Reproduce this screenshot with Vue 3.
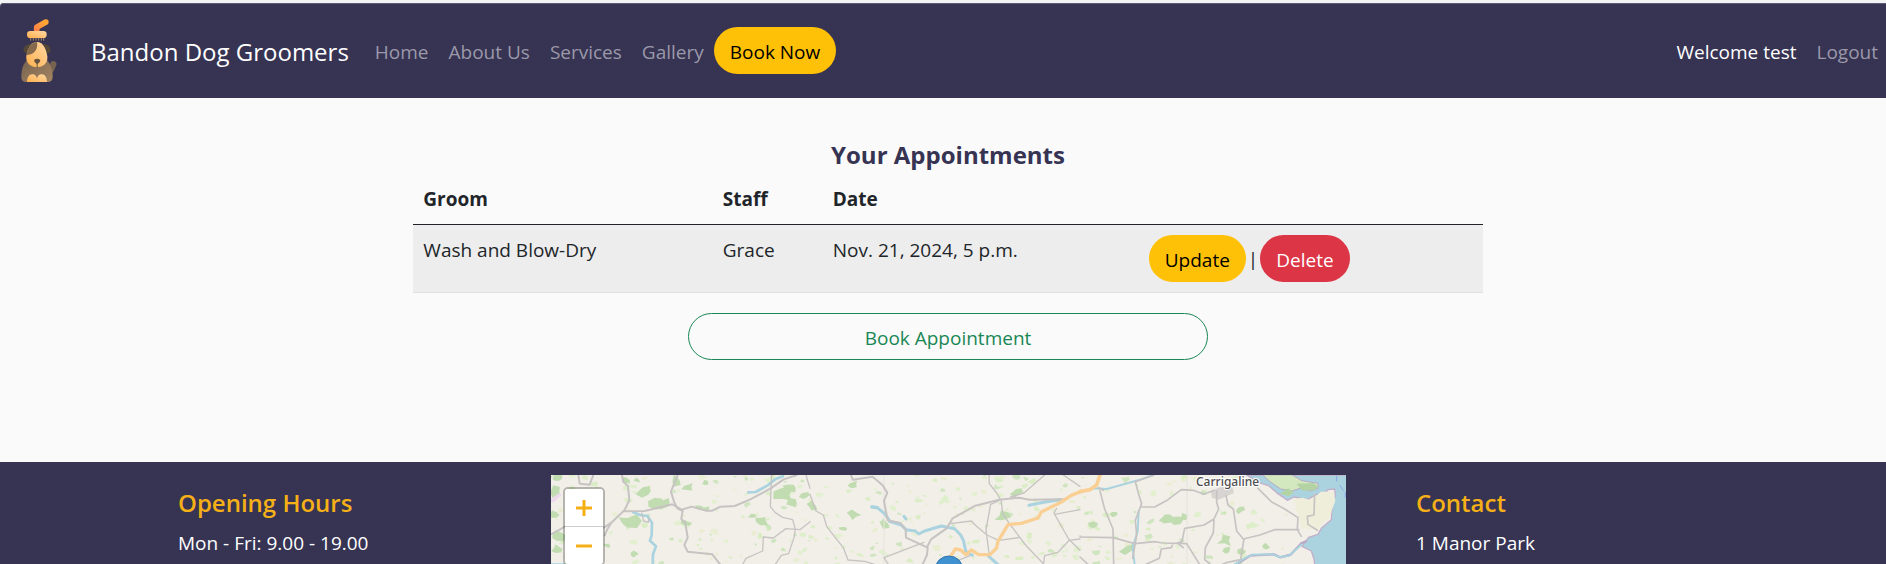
<script setup>
const links = ['Home', 'About Us', 'Services', 'Gallery']
const appointments = [{ id: 1, groom: 'Wash and Blow-Dry', staff: 'Grace', date: 'Nov. 21, 2024, 5 p.m.' }]

let seed = 11
const rand = () => {
  seed = (seed * 16807) % 2147483647
  return seed / 2147483647
}
const tones = ['#d3ecbb', '#d9efc4', '#c5e2b4', '#e6edcd', '#dff0c9']
const blob = (x, y, r) => {
  const points = []
  for (let i = 0; i < 7; i++) {
    const a = (i / 7) * Math.PI * 2
    const d = r * (0.4 + rand() * 0.9)
    points.push(`${(x + Math.cos(a) * d * 1.3).toFixed(1)},${(y + Math.sin(a) * d * 0.9).toFixed(1)}`)
  }
  return points.join(' ')
}
const fields = Array.from({ length: 330 }, (_, i) => {
  const x = rand() * 735
  const y = rand() * 92
  return { id: i, points: blob(x, y, 1 + rand() * 2.6), fill: tones[i % tones.length] }
})
const woods = [
  [6, 3, 6], [4, 16, 6], [3, 40, 4], [7, 61, 6], [6, 74, 5], [75, 5, 4], [86, 5, 3], [93, 16, 6], [78, 46, 8],
  [106, 29, 8], [112, 28, 6], [125, 6, 7], [137, 12, 5], [148, 32, 4], [156, 34, 3], [135, 48, 5], [84, 79, 4],
  [154, 8, 3], [211, 45, 6], [201, 41, 3], [234, 20, 8], [239, 13, 5], [240, 28, 5], [254, 20, 4], [56, 70, 3],
  [303, 40, 5], [334, 49, 5], [292, 54, 3], [262, 31, 5], [302, 9, 4], [452, 42, 6], [466, 17, 5],
  [543, 50, 5], [563, 40, 3], [576, 74, 6], [615, 43, 6], [625, 45, 6], [633, 43, 5], [689, 35, 4], [674, 66, 6],
  [676, 75, 5], [691, 76, 4], [716, 72, 4], [736, 18, 4], [742, 6, 4], [762, 12, 5]
].map(([x, y, r], id) => ({ id, points: blob(x, y, r) }))
</script>

<template>
  <div class="page">
    <nav class="navbar">
      <a class="brand" href="#">
        <svg class="logo" viewBox="0 0 108 192" aria-hidden="true">
          <defs>
            <linearGradient id="fur" x1="0" y1="1" x2="1" y2="0">
              <stop offset="0" stop-color="#ffb04d" />
              <stop offset="1" stop-color="#ffd8a4" />
            </linearGradient>
            <linearGradient id="coat" x1="0" y1="0" x2="1" y2="1">
              <stop offset="0" stop-color="#75624f" />
              <stop offset="1" stop-color="#a58561" />
            </linearGradient>
            <linearGradient id="grip" x1="0" y1="1" x2="1" y2="0">
              <stop offset="0" stop-color="#ff8047" />
              <stop offset="1" stop-color="#ffab32" />
            </linearGradient>
          </defs>
          <path d="M47 38V25L75 9" fill="none" stroke="url(#grip)" stroke-width="17" stroke-linejoin="round" />
          <circle cx="75" cy="9" r="8" fill="#ffa333" />
          <rect x="18" y="36" width="59" height="21" rx="10" fill="url(#fur)" />
          <path d="M29 57v8M37 57v8M45 57v8M53 57v8M61 57v8M68 57v8" stroke="#a98667" stroke-width="3" />
          <path d="M88 168V132q3-8 13-5 9 5 4 14-4 16-17 28z" fill="#75624f" />
          <path d="M22 120C7 132 1 150 1 174q0 15 14 15h65q15 0 15-15c0-24-6-42-21-54z" fill="url(#coat)" />
          <path d="M29 75Q10 75 7 94q4 11 17 8zM66 75q20 0 23 19-4 12-16 9z" fill="#554736" />
          <path d="M48 69c19 0 28 24 31 43 2 21-13 33-31 33s-34-12-32-33c2-19 13-43 32-43z" fill="url(#fur)" />
          <path d="M48 69c3 18-4 38-31 39 2-19 14-39 31-39z" fill="#84694d" />
          <path d="M39 123q9-8 19 0 0 8-8 12v11h-3v-11q-8-4-8-12z" fill="#66533f" />
          <path d="M18 189c0-13 6-23 16-23s15 8 15 23zM47 189c0-15 5-23 15-23s16 10 16 23z" fill="url(#fur)" />
        </svg>
        <span>Bandon Dog Groomers</span>
      </a>
      <a v-for="link in links" :key="link" class="nav-link" href="#">{{ link }}</a>
      <a class="btn warning" href="#">Book Now</a>
      <span class="welcome">Welcome test</span>
      <a class="nav-link" href="#">Logout</a>
    </nav>

    <main>
      <h1>Your Appointments</h1>
      <table>
        <colgroup>
          <col class="groom" /><col class="staff" /><col class="date" /><col />
        </colgroup>
        <thead>
          <tr><th>Groom</th><th>Staff</th><th>Date</th><th></th></tr>
        </thead>
        <tbody>
          <tr v-for="a in appointments" :key="a.id">
            <td>{{ a.groom }}</td>
            <td>{{ a.staff }}</td>
            <td>{{ a.date }}</td>
            <td>
              <div class="actions">
                <button type="button" class="btn warning">Update</button>
                <span>|</span>
                <button type="button" class="btn danger">Delete</button>
              </div>
            </td>
          </tr>
        </tbody>
      </table>
      <a class="btn outline" href="#">Book Appointment</a>
    </main>

    <footer>
      <section class="info hours">
        <h2>Opening Hours</h2>
        <p>Mon - Fri: 9.00 - 19.00</p>
      </section>
      <div class="map">
        <svg class="tiles" viewBox="0 0 795 90" preserveAspectRatio="xMidYMin slice" aria-label="Map">
          <rect width="795" height="90" fill="#f2efe9" />
          <polygon v-for="f in fields" :key="f.id" :points="f.points" :fill="f.fill" opacity="0.8" />
          <polygon v-for="w in woods" :key="w.id" :points="w.points" fill="#c0dcb0" />
          <path d="M0 24l8-6 3 2-8 7H0z" fill="#ecd9ec" />
          <path d="M333 0V90M636 0V90" stroke="#e6e3dc" stroke-width="1" />

          <g transform="translate(-11 -24) scale(.3333)" fill="none" stroke-linecap="round" stroke-linejoin="round">
            <path d="M280 184l20 8 22 3 14 20-1 38-5 16 18 17-9 24-1 40M625 124l22-1 36-20 24-19 22-8M33 341h40" stroke="#aad3df" stroke-width="8" />
            <g stroke="#c6c3c2" stroke-width="6">
              <path d="M246 72l4 20 14 13 4 42-14 30-40 38-12 20-8 18M33 250l30-16 12-8M115 72l4 26 30 3 11-29" />
              <path d="M192 230l20-14M254 181l60-1 83-20 28 16 30-9 42 12h20l24-12 43-2 47-20 60-32 40-28 38-12" />
              <path d="M413 72l-20 50 9 30 10 20 16 8-4 24 12 12 7 44-10 22 10 20 74 8 24 31" />
              <path d="M305 186l6 24 14 4 2-14" stroke-width="4" />
              <path d="M695 72l-4 95 15 18 22 14 30 7 8 28-4 26-16 48-22 5-20 30M810 212l-30 24-42-3-38 28-30-3-2 42-50 22-10 18M798 72l12 40" stroke-width="4" />
            </g>
          </g>

          <g transform="translate(259 -24) scale(.3333)" fill="none" stroke-linecap="round" stroke-linejoin="round">
            <path d="M186 168l16 2 24 20 14 22 34 10 14 14 28 4 10 9 18-9 50-15 40 8 18 19 9 18 6 30 20 13M657 163l44-9 50-8M535 315l30 27M282 196l6 8" stroke="#aad3df" stroke-width="9" />
            <path d="M186 168l16 2" stroke="#aad3df" stroke-width="10" />
            <g stroke="#c6c3c2" stroke-width="6">
              <path d="M123 72l5 14 60-9 30 26 14 22-10 25 11 58 38 8 16 20 1 24 65 30-2 22-14 30M353 285l10-20 47-33 18-30 68-38 72-18 60-6 30 6 102-1" />
              <path d="M537 72l1 26 22 28 14 24 4 38 22 32 50 66 54 56M420 218l64-8 14 14 33 28 35 16 60-8M566 150l-24 10-14 76 9 70M602 138l40-12 62-54M740 172l-8 14 44 78 34 34M734 190l76-14M410 342l70-28" stroke-width="4" />
              <path d="M0 130l18 50 22 12 10 34 26 34 24 30 14 37 50 4 30 9M222 320l120-46M222 320l14 22M700 342l4-28 40-10 34-36 32-4M760 72l50 34" stroke-width="4" />
            </g>
            <path d="M424 312l12-18 16 3 16 14 16-14 22 14h34l20-20 4-20 30-50 40-4 50-16 10-18 60-30 30-20 30-12" stroke="#f9cf93" stroke-width="10" />
          </g>

          <g transform="translate(529 -24) scale(.3333)" fill="none" stroke-linecap="round" stroke-linejoin="round">
            <path d="M500 72l34 22 32 10 28 24 28 20 20-10 40 8 28-16 18 4 16-18 20-2 2 20-9 24-3 48-30 26-10 18-28 9-20 27 28 14 8 24 6 46h98V72z" fill="#aad3df" stroke="#c3afca" stroke-width="4" />
            <path d="M640 144l28-4 20 6 24-14 10-10h26l14 4 4 24-10 26-4 20-24 20-16 20-46-4z" fill="#eeeeda" />
            <path d="M548 72l22 20 32 22 34 6 30-10 24 10 24-8 0-15-48-8-30-17z" fill="#d4e8bf" stroke="#b9a9c6" stroke-width="3" />
            <path d="M650 98l50-2 16 12-14 10-36 1zM600 128l24-16 18 12-16 12z" fill="#b4d3a5" />
            <path d="M392 120l38-14 28 4 4 16-46 20-20-6z" fill="#d7d4d1" />
            <path d="M476 336l34-22 72-4 18 9 32-8 32-34 14-6" stroke="#b9a9c6" stroke-width="7" />
            <path d="M462 341l30-18 24-12 62-1 20 8 28-3 38-34M176 180l-3 60-15 50 6 50M0 124l40-12 40 2 100-28 40-14" stroke="#aad3df" stroke-width="6" />
            <g stroke="#c6c3c2" stroke-width="5">
              <path d="M60 120l14 54 25 60 2 108M222 72l-56 20 10 38 9 28-19 50 4 44-12 70M184 168h40l40-22 40-30 36 2 32 12 30-12" />
              <path d="M410 120v34l6 20-14 30-30 18-58 10-8 40-14 4 18 14M402 208l-2 38-24 44-2 36 20 16M438 134l6 28 16 12 10 66 20 24 50-12 44-16h72M492 264l-10 62-40 8-20 8" />
              <path d="M534 112l40 40 40 22 40 26-2 36 12 20M704 130l-2 62-20 4 2 24 28 18M0 258l100 2 64 18 60-6 24 4 72 2 40 64M280 276l-6 14-30 4-6 28-40 18" />
              <path d="M0 318l26 24M56 110l14 8" />
            </g>
            <path d="M0 122l30-6 20-14 10-30" stroke="#f9cf93" stroke-width="11" />
            <path d="M770 76v14M780 104l10 14M796 124v14" stroke="#8ba6e6" stroke-width="3" />
          </g>

          <text x="645" y="11" class="place">Carrigaline</text>
          <g class="marker">
            <circle cx="398" cy="95" r="14" fill="#3f92cf" stroke="#2e74ae" />
            <circle cx="398" cy="95" r="6" fill="#7ab5df" />
          </g>
        </svg>
        <div class="zoom">
          <button type="button" aria-label="Zoom in">
            <svg viewBox="0 0 16 16"><path d="M0 8h16M8 0v16" /></svg>
          </button>
          <button type="button" aria-label="Zoom out">
            <svg viewBox="0 0 16 16"><path d="M0 8h16" /></svg>
          </button>
        </div>
      </div>
      <section class="info contact">
        <h2>Contact</h2>
        <p>1 Manor Park</p>
      </section>
    </footer>
  </div>
</template>

<style>
body {
  margin: 0;
  background: #f3f3f4;
}
</style>

<style scoped>
.page {
  display: flex;
  flex-direction: column;
  box-sizing: border-box;
  height: 100vh;
  padding-top: 3px;
  overflow: hidden;
  font-family: "Open Sans", "Noto Sans", sans-serif;
  font-size: 19px;
  line-height: 30px;
  color: #212529;
}
a {
  text-decoration: none;
}
.navbar {
  display: flex;
  align-items: center;
  box-sizing: border-box;
  height: 95px;
  flex-shrink: 0;
  padding: 0 8px 0 21px;
  border-top-left-radius: 4px;
  background: #363353;
  box-shadow: inset 0 1px #5b5974;
}
.brand {
  display: flex;
  align-items: center;
  gap: 34px;
  margin-right: 26px;
  color: #fff;
  font-size: 24px;
  white-space: nowrap;
}
.brand span,
.nav-link,
.welcome {
  padding-top: 3px;
}
.logo {
  width: 36px;
  height: 64px;
}
.nav-link {
  margin-right: 20px;
  color: #9b99a9;
  white-space: nowrap;
}
.nav-link:last-child {
  margin-right: 0;
}
.navbar .btn {
  margin-left: -10px;
}
.welcome {
  margin-left: auto;
  margin-right: 20px;
  color: #fff;
}
.btn {
  box-sizing: border-box;
  height: 47px;
  padding: 9px 15px 6px;
  border: 1px solid transparent;
  border-radius: 24px;
  font: inherit;
  text-align: center;
  white-space: nowrap;
}
.warning {
  background: #ffc107;
  color: #000;
}
.danger {
  background: #dc3545;
  color: #fff;
}
.outline {
  width: 520px;
  border-color: #198754;
  color: #198754;
}
main {
  display: flex;
  flex-direction: column;
  align-items: center;
  flex-shrink: 0;
  padding: 42px 0 102px 10px;
  background: #fafafa;
}
h1 {
  margin: 0 0 4px;
  color: #363353;
  font-size: 24px;
  line-height: 30px;
  font-weight: 700;
}
table {
  width: 57%;
  min-width: 1000px;
  margin-bottom: 20px;
  border-collapse: collapse;
  table-layout: fixed;
}
.groom {
  width: 28%;
}
.staff {
  width: 110px;
}
.date {
  width: 316px;
}
th,
td {
  padding: 10px;
  text-align: left;
  vertical-align: top;
}
th {
  border-bottom: 1px solid #212529;
  font-weight: 700;
}
td {
  border-bottom: 1px solid #dfe0e1;
  background: #ededed;
}
.actions {
  display: flex;
  align-items: center;
  gap: 2px;
}
footer {
  display: grid;
  grid-template-columns: 551px 1fr 540px;
  flex: 1;
  min-height: 0;
  padding-top: 13px;
  background: #363353;
}
.info {
  padding-top: 13px;
  color: #fff;
}
.hours {
  padding-left: 178px;
}
.contact {
  padding-left: 70px;
}
h2 {
  margin: 0 0 10px;
  color: #f5b017;
  font-size: 24px;
  line-height: 30px;
  font-weight: 600;
}
p {
  margin: 0;
}
.map {
  position: relative;
  min-height: 0;
  overflow: hidden;
}
.tiles {
  display: block;
  width: 100%;
  height: 100%;
}
.place {
  fill: #4d4d4d;
  stroke: #fff;
  stroke-width: 2px;
  paint-order: stroke;
  font-family: "Noto Sans", sans-serif;
  font-size: 12px;
  font-weight: 500;
}
.zoom {
  position: absolute;
  top: 12px;
  left: 12px;
  border: 2px solid rgba(0, 0, 0, 0.25);
  border-radius: 5px;
  background-clip: padding-box;
}
.zoom button {
  display: flex;
  align-items: center;
  justify-content: center;
  box-sizing: border-box;
  width: 38px;
  height: 37px;
  padding: 0;
  border: 0;
  border-radius: 0 0 3px 3px;
  background: #fff;
}
.zoom button:first-child {
  height: 38px;
  border-bottom: 1px solid #ccc;
  border-radius: 3px 3px 0 0;
}
.zoom svg {
  width: 16px;
  height: 16px;
  fill: none;
  stroke: #f5b017;
  stroke-width: 3;
}
</style>
